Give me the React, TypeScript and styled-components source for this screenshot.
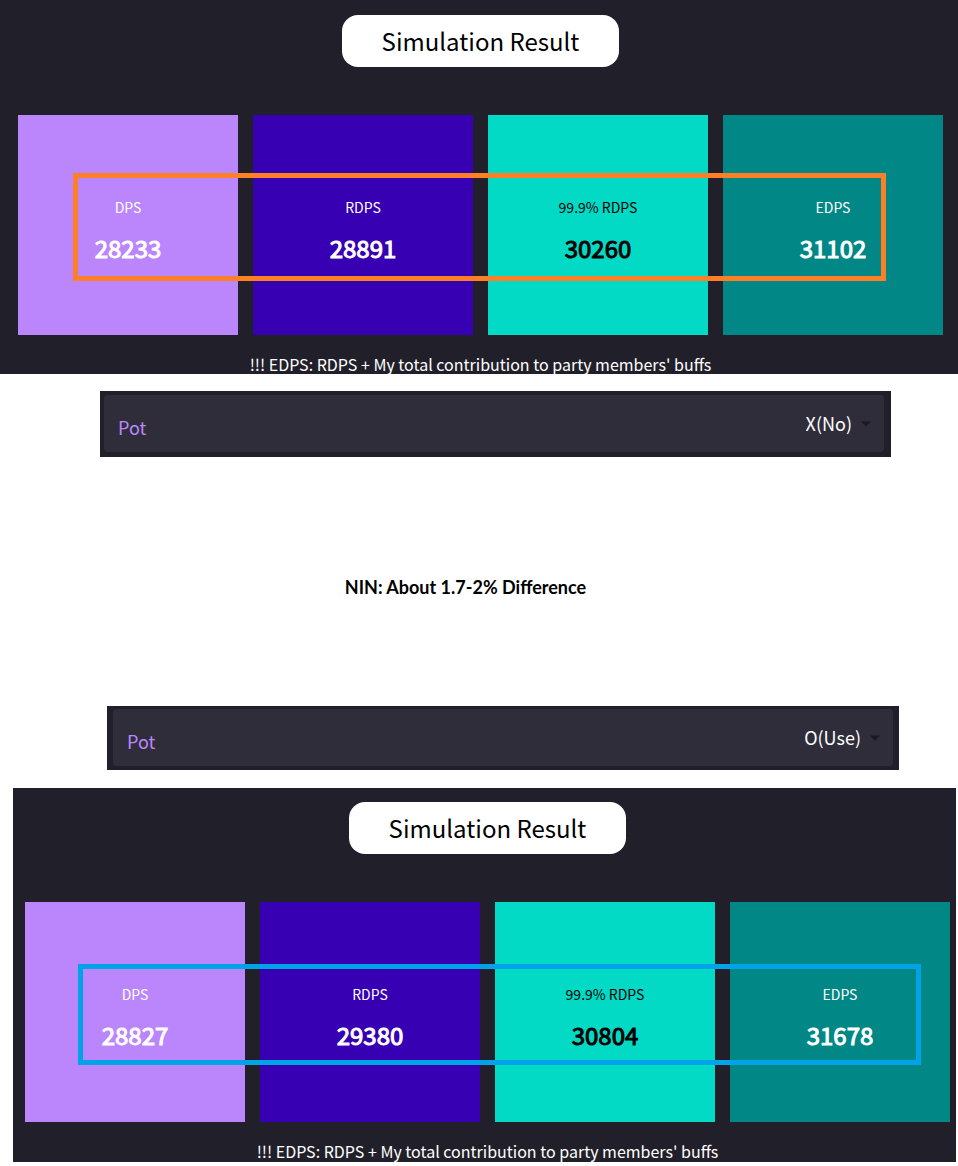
import React, { useId } from "react";
import styled, { createGlobalStyle } from "styled-components";

const GlobalStyle = createGlobalStyle`
  *, *::before, *::after { box-sizing: border-box; }
  body {
    margin: 0;
    background: #ffffff;
    color: #000000;
    font-family: "Noto Sans CJK KR", "Noto Sans", sans-serif;
  }
`;

const Page = styled.main`
  display: flex;
  flex-direction: column;
  padding-bottom: 4px;
`;

const Panel = styled.section<{ $pad: string; $margin?: string }>`
  display: flex;
  flex-direction: column;
  align-items: center;
  margin: ${(p) => p.$margin ?? "0"};
  padding: ${(p) => p.$pad};
  background: #211f29;
`;

const Title = styled.h2`
  margin: 0 0 48px;
  padding: 0 40px;
  border-radius: 16px;
  background: #ffffff;
  font-size: 24px;
  font-weight: 400;
  line-height: 52px;
`;

const CardRow = styled.div`
  position: relative;
  display: flex;
  align-self: stretch;
  gap: 15px;
`;

const Card = styled.article<{ $bg: string; $fg: string }>`
  flex: 1;
  display: flex;
  flex-direction: column;
  align-items: center;
  justify-content: center;
  gap: 11px;
  height: 220px;
  padding-top: 11px;
  background: ${(p) => p.$bg};
  color: ${(p) => p.$fg};
`;

const CardLabel = styled.h3`
  margin: 0;
  font-size: 14px;
  font-weight: 400;
  line-height: 24px;
`;

const CardValue = styled.p`
  margin: 0;
  font-size: 24px;
  font-weight: 400;
  line-height: 36px;
  -webkit-text-stroke: 1px currentColor;
`;

const Highlight = styled.div<{ $color: string; $inset: string }>`
  position: absolute;
  inset: ${(p) => p.$inset};
  border: 5px solid ${(p) => p.$color};
  pointer-events: none;
`;

const Note = styled.p`
  margin: 0;
  padding-top: 19px;
  color: #ffffff;
  font-size: 16px;
  line-height: 20px;
  white-space: nowrap;
`;

const PotBar = styled.div<{ $margin: string; $pad: string }>`
  margin: ${(p) => p.$margin};
  padding: ${(p) => p.$pad};
  background: #211f29;
`;

const PotField = styled.div`
  display: flex;
  align-items: center;
  justify-content: space-between;
  height: 57px;
  padding: 0 12px 2px 14px;
  border-radius: 4px;
  background: #302d3b;
`;

const PotLabel = styled.label`
  padding-top: 8px;
  color: #bb86fc;
  font-size: 18px;
  line-height: 28px;
`;

const SelectWrap = styled.div`
  display: flex;
  align-items: center;
  gap: 8px;
`;

const PotSelect = styled.select`
  appearance: none;
  field-sizing: content;
  padding: 0;
  border: 0;
  background: transparent;
  color: #ffffff;
  font-family: inherit;
  font-size: 18px;
  line-height: 28px;
  text-align: right;
`;

const Arrow = styled.svg`
  width: 12px;
  height: 8px;
  fill: #1b1922;
`;

const Summary = styled.p`
  margin: 118px 27px 107px 0;
  font-family: Lato, "Liberation Sans", sans-serif;
  font-size: 18px;
  font-weight: 700;
  line-height: 24px;
  text-align: center;
`;

const cardStyles = [
  { label: "DPS", bg: "#bb86fc", fg: "#ffffff" },
  { label: "RDPS", bg: "#3700b3", fg: "#ffffff" },
  { label: "99.9% RDPS", bg: "#03dac6", fg: "#000000" },
  { label: "EDPS", bg: "#018786", fg: "#ffffff" },
];

interface ResultProps {
  values: number[];
  pad: string;
  margin?: string;
  frameColor: string;
  frameInset: string;
}

function SimulationResult({ values, pad, margin, frameColor, frameInset }: ResultProps) {
  return (
    <Panel $pad={pad} $margin={margin}>
      <Title>Simulation Result</Title>
      <CardRow>
        {cardStyles.map((c, i) => (
          <Card key={c.label} $bg={c.bg} $fg={c.fg}>
            <CardLabel>{c.label}</CardLabel>
            <CardValue>{values[i]}</CardValue>
          </Card>
        ))}
        <Highlight $color={frameColor} $inset={frameInset} />
      </CardRow>
      <Note>!!! EDPS: RDPS + My total contribution to party members' buffs</Note>
    </Panel>
  );
}

function PotChoice({ value, margin, pad }: { value: string; margin: string; pad: string }) {
  const id = useId();
  return (
    <PotBar $margin={margin} $pad={pad}>
      <PotField>
        <PotLabel htmlFor={id}>Pot</PotLabel>
        <SelectWrap>
          <PotSelect id={id} defaultValue={value}>
            <option value="no">X(No)</option>
            <option value="use">O(Use)</option>
          </PotSelect>
          <Arrow viewBox="0 0 12 8" aria-hidden="true">
            <path d="M1 2.5h10l-5 5z" />
          </Arrow>
        </SelectWrap>
      </PotField>
    </PotBar>
  );
}

export default function App() {
  return (
    <>
      <GlobalStyle />
      <Page>
        <SimulationResult
          values={[28233, 28891, 30260, 31102]}
          pad="15px 15px 0 18px"
          frameColor="#ff7f27"
          frameInset="58px 57px 54px 55px"
        />
        <PotChoice value="no" margin="17px 67px 0 100px" pad="4px 7px 5px 4px" />
        <Summary>NIN: About 1.7-2% Difference</Summary>
        <PotChoice value="use" margin="0 59px 18px 107px" pad="3px 6px 4px" />
        <SimulationResult
          values={[28827, 29380, 30804, 31678]}
          pad="14px 6px 1px 12px"
          margin="0 2px 0 13px"
          frameColor="#00a2e8"
          frameInset="62px 29px 57px 53px"
        />
      </Page>
    </>
  );
}
